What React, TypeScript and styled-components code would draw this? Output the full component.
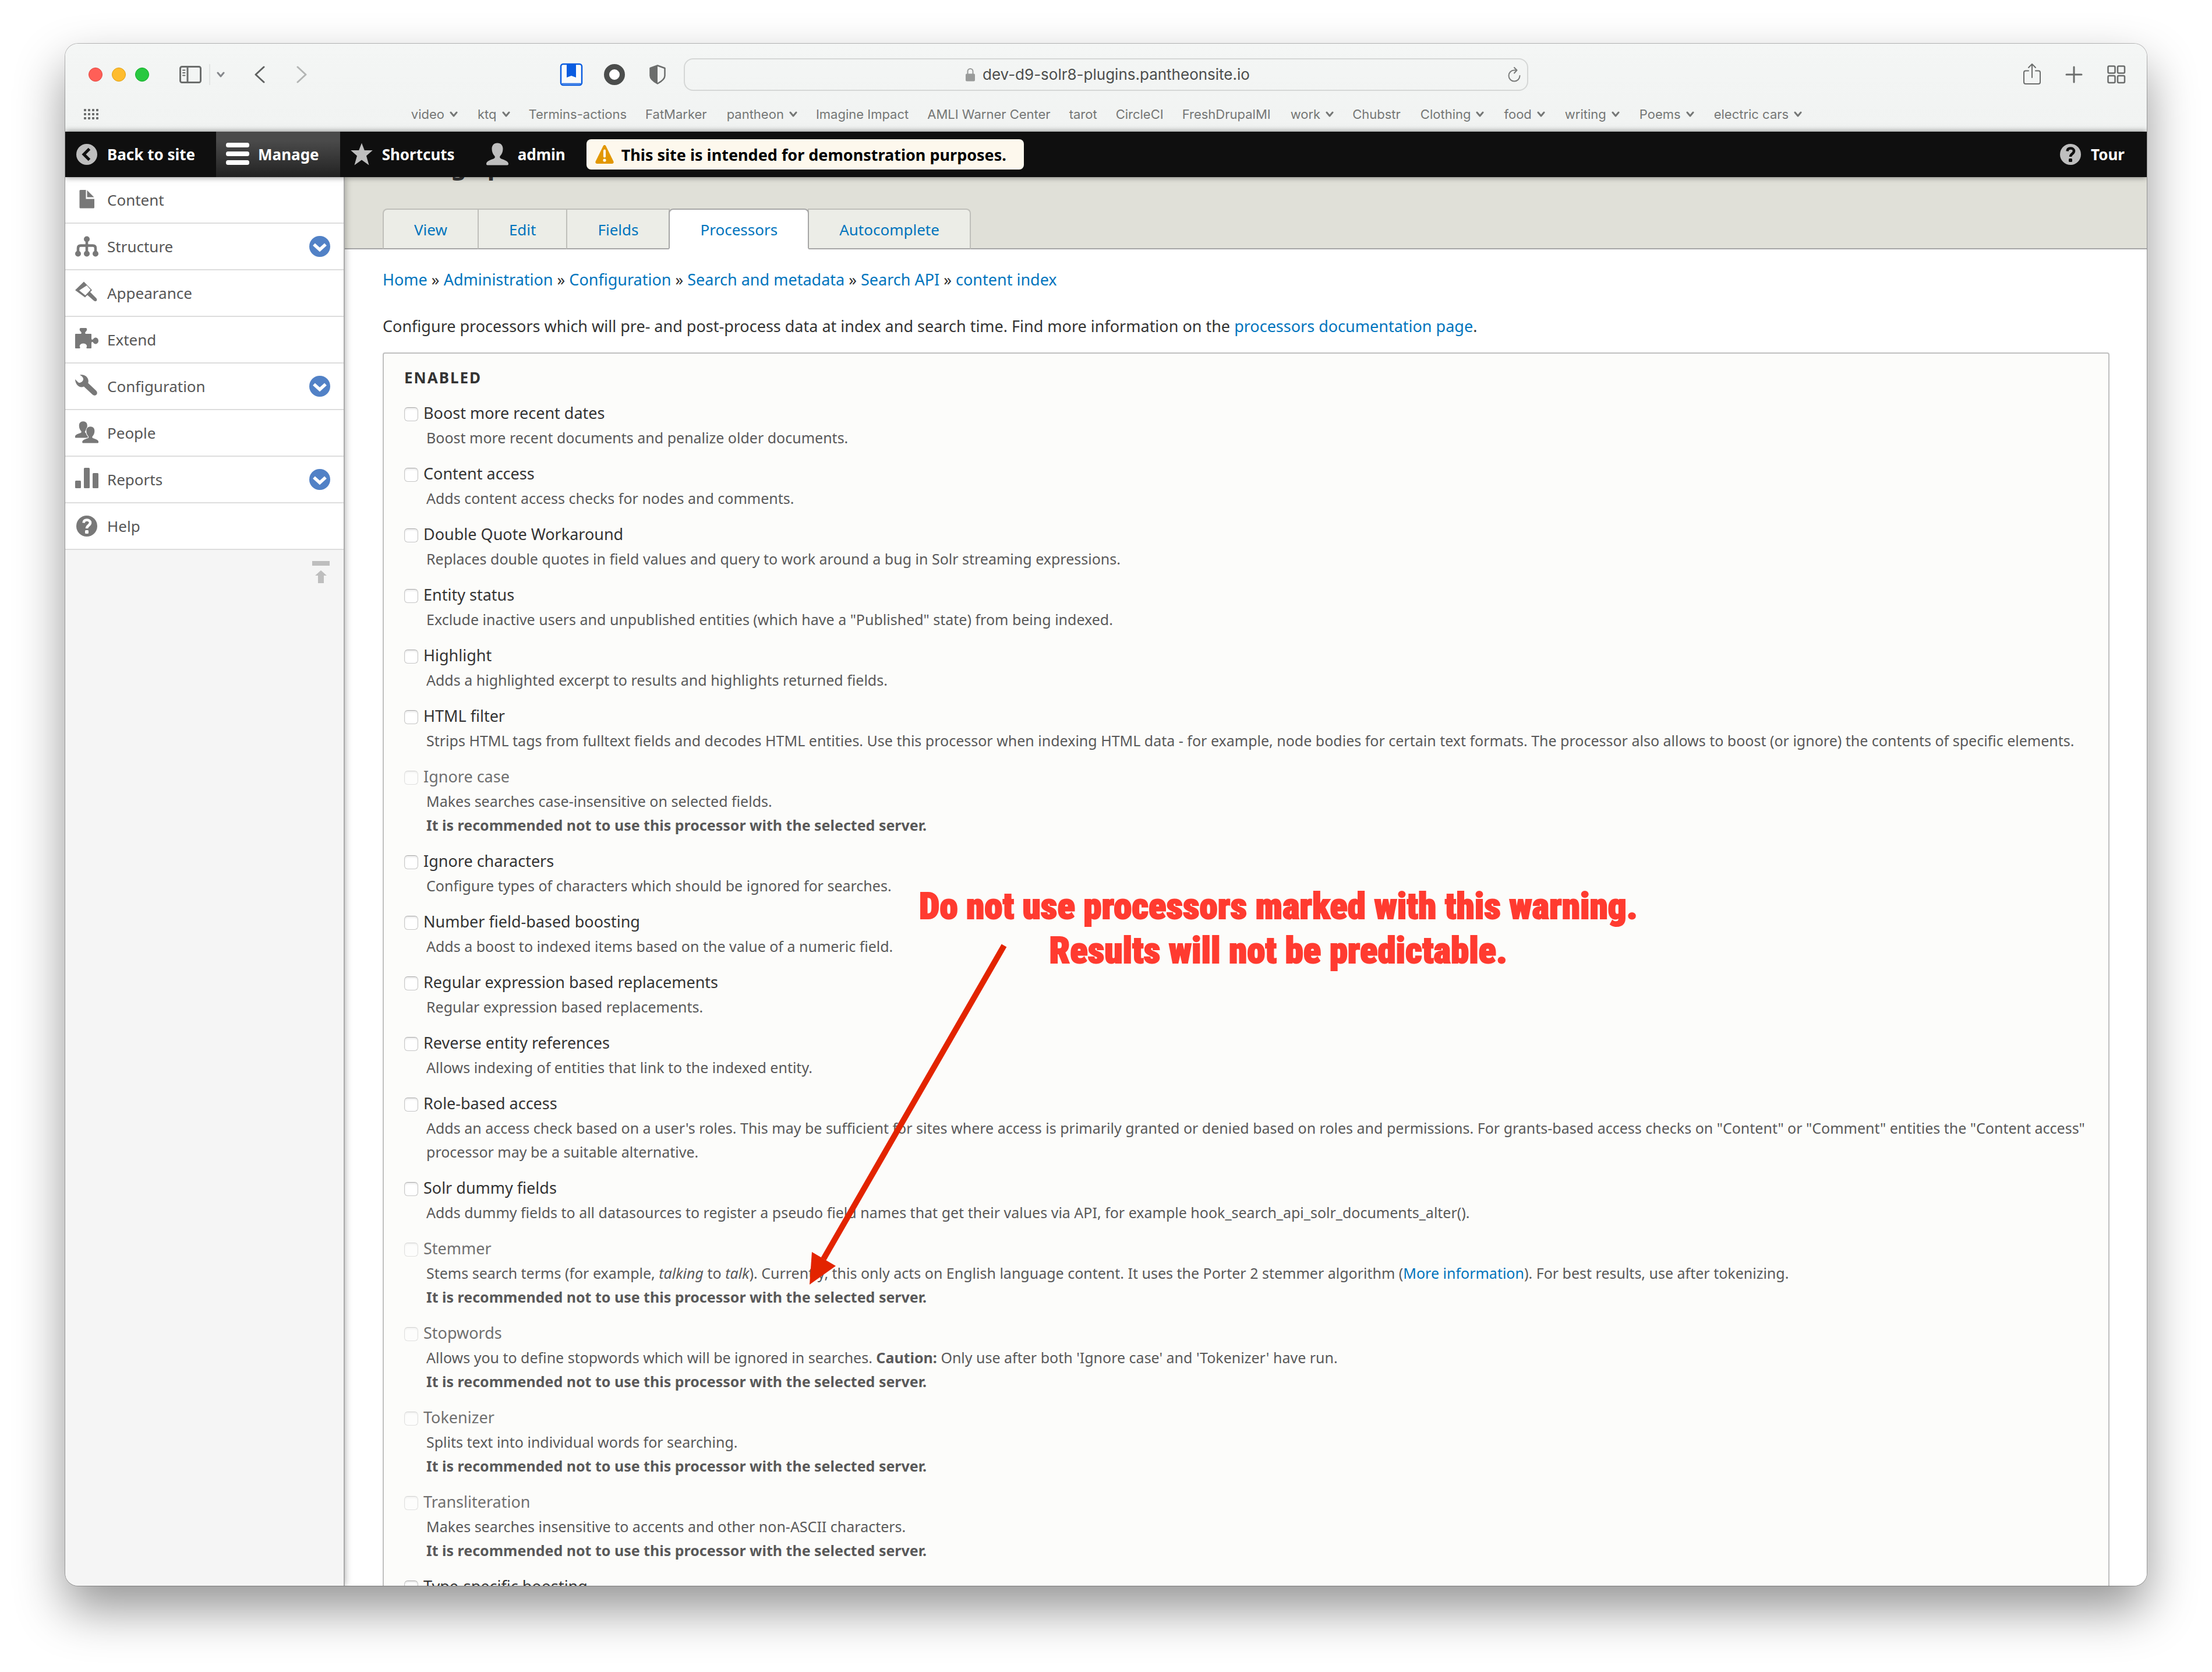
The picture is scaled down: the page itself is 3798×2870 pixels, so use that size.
import React from "react";
import styled, { createGlobalStyle, css } from "styled-components";

const uiFont = `"Noto Sans", "Open Sans", "DejaVu Sans", sans-serif`;
const chromeFont = `Inter, Roboto, "Liberation Sans", sans-serif`;
const linkBlue = "#0074bd";

const GlobalStyle = createGlobalStyle`
  *, *::before, *::after { box-sizing: border-box; }
  body { margin: 0; background: #fff; overflow: hidden; }
  button { border: 0; padding: 0; background: none; font: inherit; color: inherit; }
  ul, ol { list-style: none; margin: 0; padding: 0; }
  svg { display: block; flex: none; }
`;

const Desktop = styled.div`
  height: 100vh;
  padding: 75px 112px 148px;
  font-family: ${uiFont};
  color: #333;
`;

const BrowserWindow = styled.div`
  display: flex;
  flex-direction: column;
  height: 100%;
  overflow: hidden;
  border-radius: 22px;
  background: #fff;
  box-shadow: 0 0 0 1px rgba(0, 0, 0, 0.26), 0 40px 84px rgba(0, 0, 0, 0.42);
`;

/* ---------- browser chrome ---------- */

const Chrome = styled.header`
  flex: none;
  padding-top: 25px;
  background: linear-gradient(#f4f6f5, #f1f3f2);
  font-family: ${chromeFont};
  color: #6b6d6c;
`;

const ChromeRow = styled.div`
  display: grid;
  grid-template-columns: 1fr minmax(0, 1450px) 1fr;
  align-items: center;
  height: 56px;
`;

const ChromeLeft = styled.div`
  display: flex;
  align-items: center;
  padding: 0 25px 0 40px;
`;

const Lights = styled.div`
  display: flex;
  gap: 16px;
  margin-right: 51px;
`;

const Light = styled.button<{ $fill: string; $edge: string }>`
  width: 24px;
  height: 24px;
  border-radius: 50%;
  border: 1px solid ${(p) => p.$edge};
  background: ${(p) => p.$fill};
`;

const Divider = styled.span`
  width: 2px;
  height: 36px;
  margin: 0 11px 0 12px;
  background: #e2e4e3;
`;

const HistoryButtons = styled.div`
  display: flex;
  gap: 54px;
  margin-left: 51px;
`;

const Extensions = styled.div`
  display: flex;
  gap: 34px;
  margin-left: auto;
`;

const ChromeRight = styled.div`
  display: flex;
  justify-content: flex-end;
  gap: 32px;
  padding-right: 33px;
`;

const AddressBar = styled.div`
  display: flex;
  align-items: center;
  height: 56px;
  padding: 0 10px;
  border: 2px solid #d5d7d6;
  border-radius: 16px;
`;

const Address = styled.label`
  flex: 1;
  display: flex;
  align-items: center;
  justify-content: center;
  gap: 12px;
  padding-left: 30px;
`;

const AddressInput = styled.input`
  width: 460px;
  padding: 0;
  border: 0;
  outline: 0;
  background: none;
  font: 400 26px/36px ${chromeFont};
  color: #4c4e4d;
`;

const BookmarksRow = styled.div`
  display: grid;
  grid-template-columns: 1fr auto 1fr;
  align-items: center;
  height: 60px;
  margin-top: 10px;
  padding-left: 32px;
  padding-right: 32px;
`;

const Bookmarks = styled.ul`
  display: flex;
  gap: 32px;
`;

const Bookmark = styled.a<{ $menu?: boolean }>`
  display: flex;
  align-items: center;
  gap: 9px;
  padding-left: ${(p) => (p.$menu ? "2px" : "0")};
  font-size: 22px;
  line-height: 30px;
  color: #757776;
  text-decoration: none;
  white-space: nowrap;
`;

/* ---------- admin toolbar ---------- */

const AdminBar = styled.nav`
  position: relative;
  z-index: 3;
  flex: none;
  display: flex;
  align-items: stretch;
  height: 78px;
  background: #0f0f0f;
  box-shadow: 0 0 10px rgba(0, 0, 0, 0.5);
  font-weight: 700;
  font-size: 26px;
  color: #fff;
`;

const BarItem = styled.a<{ $active?: boolean }>`
  display: flex;
  align-items: center;
  gap: 15px;
  padding: 0 36px 0 17px;
  color: #fff;
  text-decoration: none;
  ${(p) => p.$active && css`background: linear-gradient(#4a4a4a 20%, #222);`}
`;

const DemoNotice = styled.div`
  align-self: center;
  display: flex;
  align-items: center;
  gap: 13px;
  height: 52px;
  padding: 0 30px 0 15px;
  border-radius: 8px;
  background: #fdf8ed;
  color: #000;
  font-size: 27px;
`;

const BarEnd = styled.div`
  display: flex;
  margin-left: auto;
  padding-right: 2px;
`;

/* ---------- page body ---------- */

const Viewport = styled.div`
  flex: 1;
  min-height: 0;
  display: flex;
  overflow: hidden;
`;

const Tray = styled.nav`
  position: relative;
  z-index: 2;
  flex: 0 0 480px;
  border-right: 2px solid #aaa;
  background: #f5f5f5;
  box-shadow: 0 0 12px rgba(0, 0, 0, 0.35);
`;

const TrayRow = styled.li`
  display: flex;
  align-items: center;
  height: 80px;
  padding-right: 23px;
  border-bottom: 2px solid #ddd;
  background: #fff;
`;

const TrayLink = styled.a`
  flex: 1;
  display: flex;
  align-items: center;
  gap: 15px;
  padding-left: 17px;
  font-size: 26px;
  line-height: 36px;
  color: #565656;
  text-decoration: none;
`;

const TrayFoot = styled.div`
  display: flex;
  justify-content: flex-end;
  padding: 19px 23px;
`;

const Main = styled.main`
  position: relative;
  flex: 1;
  min-width: 0;
  background: #fff;
`;

const PageHeader = styled.div`
  padding: 0 64px 0 65px;
  border-bottom: 2px solid #a6a6a6;
  background: #e0e0d8;
`;

const PageTitle = styled.h1`
  margin: -45px 0 49px;
  font-size: 42px;
  line-height: 50px;
  font-weight: 700;
`;

const Tabs = styled.ul`
  display: flex;
  margin-bottom: -2px;
`;

const TabItem = styled.li`
  & + & { margin-left: -2px; }
`;

const Tab = styled.a<{ $active?: boolean }>`
  position: relative;
  z-index: ${(p) => (p.$active ? 1 : 0)};
  display: block;
  padding: 16px 52px 14px;
  border: 2px solid ${(p) => (p.$active ? "#a6a6a6" : "#bfbfba")};
  border-bottom-color: ${(p) => (p.$active ? "#fff" : "#a6a6a6")};
  border-radius: ${(p) => (p.$active ? "8px 8px 0 0" : "0")};
  background: ${(p) => (p.$active ? "#fff" : "#ecede7")};
  font-size: 26px;
  line-height: 36px;
  color: ${linkBlue};
  text-decoration: none;

  ${TabItem}:first-child & { border-top-left-radius: 8px; }
  ${TabItem}:last-child & { border-top-right-radius: 8px; }
`;

const Content = styled.div`
  padding: 32px 64px 0 65px;
  font-size: 27px;
  line-height: 40px;
`;

const Link = styled.a`
  color: ${linkBlue};
  text-decoration: none;
`;

const Intro = styled.p`
  margin: 40px 0 25px;
`;

const Processors = styled.fieldset`
  min-width: 0;
  margin: 0;
  padding: 19px 34px 40px 35px;
  border: 2px solid #bfbfbf;
  border-radius: 4px;
  background: #fcfcfa;
`;

const Legend = styled.legend`
  float: left;
  width: 100%;
  margin-bottom: 17px;
  padding: 0;
  font-size: 26px;
  line-height: 44px;
  font-weight: 700;
  letter-spacing: 2px;
  text-transform: uppercase;
`;

const ProcessorList = styled.div`
  clear: both;
`;

const Processor = styled.div`
  margin-bottom: 19px;
`;

const ProcessorHead = styled.div`
  display: flex;
  align-items: center;
  gap: 9px;
`;

const Checkbox = styled.input`
  appearance: none;
  flex: none;
  width: 24px;
  height: 24px;
  margin: 3px 0 0;
  border: 1px solid #c6c6c6;
  border-top-color: #aaa;
  border-radius: 6px;
  background: #fff;
  box-shadow: inset 0 2px 3px rgba(0, 0, 0, 0.1);

  &:disabled { opacity: 0.5; }
`;

const ProcessorLabel = styled.label<{ $disabled?: boolean }>`
  font-size: 27px;
  line-height: 44px;
  color: ${(p) => (p.$disabled ? "#6f6f6f" : "#333")};
`;

const Description = styled.div`
  padding-left: 38px;
  font-size: 25px;
  line-height: 41px;
  color: #595959;
`;

const Callout = styled.p`
  position: absolute;
  z-index: 1;
  top: 1214px;
  left: 986px;
  margin: 0;
  font: 900 63px/76px "Roboto Condensed", Roboto, sans-serif;
  -webkit-text-stroke: 2px #ff3b30;
  text-align: center;
  color: #ff3b30;
`;

const CalloutArrow = styled.svg`
  position: absolute;
  z-index: 1;
  top: 1311px;
  left: 788px;
`;

/* ---------- icons ---------- */

const Stroke = ({ w = 40, h = 40, d, color = "#6b6d6c", sw = 3 }: { w?: number; h?: number; d: string; color?: string; sw?: number }) => (
  <svg width={w} height={h} viewBox={`0 0 ${w} ${h}`} fill="none" stroke={color} strokeWidth={sw} strokeLinecap="round" strokeLinejoin="round">
    <path d={d} />
  </svg>
);

const SmallChevron = ({ color = "#757776" }: { color?: string }) => (
  <Stroke w={14} h={12} d="M2 3l5 6 5-6" color={color} sw={3} />
);

const SidebarIcon = () => (
  <svg width="40" height="32" viewBox="0 0 40 32" fill="none" stroke="#6b6d6c" strokeWidth="3" strokeLinecap="round">
    <rect x="2.500" y="2.500" width="35" height="27" rx="3" />
    <path d="M15 2.500v27" />
    <path d="M7 8.500h3.500M7 13h3.500M7 17.500h3.500" strokeWidth="2" />
  </svg>
);

const BookmarkExtension = () => (
  <svg width="40" height="40" viewBox="0 0 40 40">
    <rect x="2" y="2" width="36" height="36" rx="4" fill="#fff" fillOpacity="0.6" stroke="#0a5ce0" strokeWidth="2.500" />
    <path d="M12 2h16v23l-8-3-8 3z" fill="#0a5ce0" />
    <path d="M4 35.500h32" stroke="#0a5ce0" strokeWidth="1.500" />
  </svg>
);

const RingExtension = () => (
  <svg width="40" height="40" viewBox="0 0 40 40">
    <circle cx="20" cy="20" r="13.500" fill="#fff" stroke="#4b4d4c" strokeWidth="9" />
  </svg>
);

const ShieldIcon = () => (
  <svg width="40" height="40" viewBox="0 0 40 40">
    <path d="M20 4.500L32.500 9v13c0 6-6 10-12.500 13.500C13.500 32 7.500 28 7.500 22V9z" fill="none" stroke="#6b6d6c" strokeWidth="2.500" strokeLinejoin="round" />
    <path d="M20 4.500L7.500 9v13c0 6 6 10 12.500 13.500z" fill="#6b6d6c" />
  </svg>
);

const LockIcon = () => (
  <svg width="18" height="24" viewBox="0 0 18 24">
    <rect x="1" y="10.500" width="16" height="13" rx="2" fill="#999b9a" />
    <path d="M4.500 11V6.500a4.500 4.500 0 0 1 9 0V11" fill="none" stroke="#999b9a" strokeWidth="2" />
  </svg>
);

const AppsGrid = () => (
  <svg width="26" height="18" viewBox="0 0 26 18" fill="#6b6d6c">
    {[0, 7, 14].map((y) => [0, 7, 14, 21].map((x) => <rect key={`${x}-${y}`} x={x} y={y} width="4" height="4" rx="1" />))}
  </svg>
);

const TabOverview = () => (
  <svg width="40" height="40" viewBox="0 0 40 40" fill="none" stroke="#6b6d6c" strokeWidth="2.500">
    <rect x="6.500" y="5.500" width="12" height="12" rx="2" />
    <rect x="23" y="5.500" width="12" height="12" rx="2" />
    <rect x="6.500" y="22" width="12" height="12" rx="2" />
    <rect x="23" y="22" width="12" height="12" rx="2" />
  </svg>
);

const BackDisc = () => (
  <svg width="40" height="40" viewBox="0 0 40 40">
    <circle cx="20" cy="20" r="18" fill="#bebebe" />
    <path d="M24.500 10.500L15 20l9.500 9.500" fill="none" stroke="#0f0f0f" strokeWidth="5" />
  </svg>
);

const MenuIcon = () => (
  <svg width="40" height="40" viewBox="0 0 40 40" fill="#fff">
    <rect y="0" width="40" height="8" rx="3.500" />
    <rect y="15" width="40" height="8" rx="3.500" />
    <rect y="30" width="40" height="8" rx="3.500" />
  </svg>
);

const StarIcon = () => (
  <svg width="40" height="40" viewBox="0 0 40 40" fill="#bebebe">
    <path d="M20 .5l4.800 12.500h14l-10.800 9.500 4.500 16L20 29.500 7.500 38.500l4.500-16L1.200 13h14z" />
  </svg>
);

const PersonShape = "M20 .5c-6 0-9.500 4-9.500 10 0 5 2 9.500 4.500 12 1.500 1.800 1 4-1.500 5C8 29.500 1 31.500 1 36.500c0 1.300.8 2 2 2h34c1.200 0 2-.7 2-2 0-5-7-7-12.500-9-2.500-1-3-3.200-1.500-5 2.500-2.500 4.500-7 4.500-12 0-6-3.500-10-9.500-10z";

const PersonIcon = () => (
  <svg width="40" height="40" viewBox="0 0 40 40" fill="#bebebe"><path d={PersonShape} /></svg>
);

const WarningIcon = () => (
  <svg width="32" height="34" viewBox="0 0 32 34">
    <path d="M16 1c1 0 1.800.5 2.300 1.500l12.800 26c1.200 2.500.2 4.500-2.300 4.500H3.200C.7 33-.3 31 .9 28.500l12.800-26C14.200 1.500 15 1 16 1z" fill="#e29700" />
    <path d="M16 10.500v10" stroke="#fff" strokeWidth="4" strokeLinecap="round" />
    <circle cx="16" cy="27" r="2.600" fill="#fff" />
  </svg>
);

const HelpDisc = ({ fill, mark }: { fill: string; mark: string }) => (
  <svg width="40" height="40" viewBox="0 0 40 40">
    <circle cx="20" cy="20" r="18" fill={fill} />
    <path d="M14.500 14.500c.3-3.500 2.800-5 5.800-5 3.400 0 5.700 2 5.700 4.800 0 4.700-6 4.700-6 9.700" fill="none" stroke={mark} strokeWidth="4.500" />
    <rect x="17" y="27" width="6" height="6" rx="1.500" fill={mark} />
  </svg>
);

const TrayIcon = ({ children }: { children: React.ReactNode }) => (
  <svg width="40" height="40" viewBox="0 0 40 40" fill="#787878">{children}</svg>
);

const trayIcons: Record<string, React.ReactNode> = {
  Content: (
    <TrayIcon>
      <path d="M9 3h9.500v15.500H33V33a1.500 1.500 0 0 1-1.500 1.500H9A1.500 1.500 0 0 1 7.500 33V4.500A1.500 1.500 0 0 1 9 3zM20.500 3.500L32.500 15.500h-12z" />
    </TrayIcon>
  ),
  Structure: (
    <TrayIcon>
      <path d="M20 8v24M5 32v-9c0-3 1.500-4.500 4.500-4.500h21c3 0 4.500 1.500 4.500 4.500v9" fill="none" stroke="#787878" strokeWidth="4.500" />
      <circle cx="20" cy="7.500" r="5" />
      <circle cx="5" cy="32.500" r="5" />
      <circle cx="20" cy="32.500" r="5" />
      <circle cx="35" cy="32.500" r="5" />
    </TrayIcon>
  ),
  Appearance: (
    <TrayIcon>
      <path d="M15 .5l14 14.500-12 12.500L0 15z" />
      <path d="M19 7l6.500 7.500-9 9.500L6 15.500z" fill="#fff" transform="translate(1 0)" />
      <path d="M25 17.500l10.500 10.500c1.500 1.500 2.500 3.500 1.500 5s-3.500 1.500-5 0L20.500 23z" />
    </TrayIcon>
  ),
  Extend: (
    <TrayIcon>
      <path d="M1 10h9c1.500-1 1-3-1-4.500C7 3.500 7.500 0 9.500 0h9c2 0 2.500 3.500.5 5.500-2 1.500-2.500 3.500-1 4.500h9a1 1 0 0 1 1 1v8c1 1.500 2.500 1 3.500-.5 3-4 8.500-1.500 8.500 3.500s-5.500 7.500-8.500 3.500c-1-1.500-2.500-2-3.500-.5V34a1 1 0 0 1-1 1h-7c-1-1-.5-2 0-3 1-2-1.500-5.500-6-5.500s-7 3.500-6 5.500c.5 1 1 2 0 3H1a1 1 0 0 1-1-1V11a1 1 0 0 1 1-1z" />
    </TrayIcon>
  ),
  Configuration: (
    <TrayIcon>
      <path d="M8 .8C15-1 21 3 22.500 9c.5 2 .2 4-.2 5.500L36 27.500c2.500 2.500 2 5.500.5 7s-4.500 2-7-.5L15 20.500C8 24 .5 18 0 8l5.500 5.500c2 1.500 8-.5 8.500-5.500.2-3-2.500-5.500-6-7.200z" />
    </TrayIcon>
  ),
  People: (
    <TrayIcon>
      <g transform="translate(-1 0) scale(.74)"><path d={PersonShape} /></g>
      <g transform="translate(11.500 9) scale(.74)" stroke="#fff" strokeWidth="3" paintOrder="stroke"><path d={PersonShape} /></g>
    </TrayIcon>
  ),
  Reports: (
    <TrayIcon>
      <rect x="0" y="22" width="10" height="13" rx="1.500" />
      <rect x="15" y="0" width="10" height="35" rx="1.500" />
      <rect x="30" y="9" width="10" height="26" rx="1.500" />
    </TrayIcon>
  ),
  Help: <HelpDisc fill="#787878" mark="#fff" />,
};

const ExpandDisc = () => (
  <svg width="36" height="36" viewBox="0 0 36 36">
    <circle cx="18" cy="18" r="18" fill="#5181c6" />
    <path d="M8 14.500l10 9 10-9" fill="none" stroke="#fff" strokeWidth="5.500" />
  </svg>
);

const CollapseIcon = () => (
  <svg width="32" height="40" viewBox="0 0 32 40" fill="#bebebe">
    <path d="M1 0h30v8H1zM16 16l10 9h-5v13H11V25H6z" />
  </svg>
);

/* ---------- data ---------- */

const bookmarks: [string, boolean][] = [
  ["video", true], ["ktq", true], ["Termins-actions", false], ["FatMarker", false], ["pantheon", true],
  ["Imagine Impact", false], ["AMLI Warner Center", false], ["tarot", false], ["CircleCI", false],
  ["FreshDrupalMI", false], ["work", true], ["Chubstr", false], ["Clothing", true], ["food", true],
  ["writing", true], ["Poems", true], ["electric cars", true],
];

const trayItems: [string, boolean][] = [
  ["Content", false], ["Structure", true], ["Appearance", false], ["Extend", false],
  ["Configuration", true], ["People", false], ["Reports", true], ["Help", false],
];

const tabs = ["View", "Edit", "Fields", "Processors", "Autocomplete"];
const crumbs = ["Home", "Administration", "Configuration", "Search and metadata", "Search API", "content index"];

type ProcessorInfo = { name: string; text: React.ReactNode; discouraged?: boolean };

const processors: ProcessorInfo[] = [
  { name: "Boost more recent dates", text: "Boost more recent documents and penalize older documents." },
  { name: "Content access", text: "Adds content access checks for nodes and comments." },
  { name: "Double Quote Workaround", text: "Replaces double quotes in field values and query to work around a bug in Solr streaming expressions." },
  { name: "Entity status", text: 'Exclude inactive users and unpublished entities (which have a "Published" state) from being indexed.' },
  { name: "Highlight", text: "Adds a highlighted excerpt to results and highlights returned fields." },
  { name: "HTML filter", text: "Strips HTML tags from fulltext fields and decodes HTML entities. Use this processor when indexing HTML data - for example, node bodies for certain text formats. The processor also allows to boost (or ignore) the contents of specific elements." },
  { name: "Ignore case", text: "Makes searches case-insensitive on selected fields.", discouraged: true },
  { name: "Ignore characters", text: "Configure types of characters which should be ignored for searches." },
  { name: "Number field-based boosting", text: "Adds a boost to indexed items based on the value of a numeric field." },
  { name: "Regular expression based replacements", text: "Regular expression based replacements." },
  { name: "Reverse entity references", text: "Allows indexing of entities that link to the indexed entity." },
  { name: "Role-based access", text: 'Adds an access check based on a user\'s roles. This may be sufficient for sites where access is primarily granted or denied based on roles and permissions. For grants-based access checks on "Content" or "Comment" entities the "Content access" processor may be a suitable alternative.' },
  { name: "Solr dummy fields", text: "Adds dummy fields to all datasources to register a pseudo field names that get their values via API, for example hook_search_api_solr_documents_alter()." },
  {
    name: "Stemmer",
    text: <>Stems search terms (for example, <em>talking</em> to <em>talk</em>). Currently, this only acts on English language content. It uses the Porter 2 stemmer algorithm (<Link href="#more">More information</Link>). For best results, use after tokenizing.</>,
    discouraged: true,
  },
  {
    name: "Stopwords",
    text: <>Allows you to define stopwords which will be ignored in searches. <strong>Caution:</strong> Only use after both 'Ignore case' and 'Tokenizer' have run.</>,
    discouraged: true,
  },
  { name: "Tokenizer", text: "Splits text into individual words for searching.", discouraged: true },
  { name: "Transliteration", text: "Makes searches insensitive to accents and other non-ASCII characters.", discouraged: true },
  { name: "Type-specific boosting", text: "" },
];

/* ---------- page ---------- */

const BrowserChrome = () => (
  <Chrome>
    <ChromeRow>
      <ChromeLeft>
        <Lights>
          <Light aria-label="Close" $fill="#ff5f57" $edge="#e2463f" />
          <Light aria-label="Minimize" $fill="#febc2e" $edge="#e1a116" />
          <Light aria-label="Zoom" $fill="#28c840" $edge="#12ac28" />
        </Lights>
        <button aria-label="Show sidebar"><SidebarIcon /></button>
        <Divider />
        <button aria-label="Sidebar options"><SmallChevron color="#85878b" /></button>
        <HistoryButtons>
          <button aria-label="Back"><Stroke w={18} h={30} d="M16 2L2 15l14 13" color="#5f6160" /></button>
          <button aria-label="Forward"><Stroke w={18} h={30} d="M2 2l14 13L2 28" color="#b3b5b4" /></button>
        </HistoryButtons>
        <Extensions>
          <button aria-label="Save bookmark"><BookmarkExtension /></button>
          <button aria-label="Recorder"><RingExtension /></button>
          <button aria-label="Privacy report"><ShieldIcon /></button>
        </Extensions>
      </ChromeLeft>
      <AddressBar>
        <Address>
          <LockIcon />
          <AddressInput aria-label="Address" defaultValue="dev-d9-solr8-plugins.pantheonsite.io" />
        </Address>
        <button aria-label="Reload">
          <Stroke w={24} h={28} d="M21.500 16a9.500 9.500 0 1 1-9.500-9.500h4M12 2l4.500 4.500L12 11.500" color="#7a7c7b" sw={2} />
        </button>
      </AddressBar>
      <ChromeRight>
        <button aria-label="Share"><Stroke d="M14 13.500H9c-2 0-3 1-3 3V33c0 2 1 3 3 3h22c2 0 3-1 3-3V16.500c0-2-1-3-3-3h-5M20 25V2M14 8l6-6 6 6" sw={2} /></button>
        <button aria-label="New tab"><Stroke d="M20 7v26M7 20h26" /></button>
        <button aria-label="Tab overview"><TabOverview /></button>
      </ChromeRight>
    </ChromeRow>
    <BookmarksRow>
      <AppsGrid />
      <Bookmarks>
        {bookmarks.map(([name, menu]) => (
          <li key={name}>
            <Bookmark href="#bookmark" $menu={menu}>
              {name}
              {menu && <SmallChevron />}
            </Bookmark>
          </li>
        ))}
      </Bookmarks>
    </BookmarksRow>
  </Chrome>
);

export default function App() {
  return (
    <Desktop>
      <GlobalStyle />
      <BrowserWindow>
        <BrowserChrome />
        <AdminBar aria-label="Administration">
          <BarItem href="#back"><BackDisc />Back to site</BarItem>
          <BarItem href="#manage" $active><MenuIcon />Manage</BarItem>
          <BarItem href="#shortcuts"><StarIcon />Shortcuts</BarItem>
          <BarItem href="#admin"><PersonIcon />admin</BarItem>
          <DemoNotice><WarningIcon />This site is intended for demonstration purposes.</DemoNotice>
          <BarEnd>
            <BarItem href="#tour"><HelpDisc fill="#bebebe" mark="#0f0f0f" />Tour</BarItem>
          </BarEnd>
        </AdminBar>
        <Viewport>
          <Tray aria-label="Manage">
            <ul>
              {trayItems.map(([name, expandable]) => (
                <TrayRow key={name}>
                  <TrayLink href="#tray">{trayIcons[name]}{name}</TrayLink>
                  {expandable && <button aria-label={`Expand ${name}`}><ExpandDisc /></button>}
                </TrayRow>
              ))}
            </ul>
            <TrayFoot>
              <button aria-label="Horizontal orientation"><CollapseIcon /></button>
            </TrayFoot>
          </Tray>
          <Main>
            <PageHeader>
              <PageTitle>Manage processors for search index content index</PageTitle>
              <Tabs>
                {tabs.map((name) => (
                  <TabItem key={name}>
                    <Tab href="#tab" $active={name === "Processors"}>{name}</Tab>
                  </TabItem>
                ))}
              </Tabs>
            </PageHeader>
            <Content>
              <nav aria-label="Breadcrumb">
                {crumbs.map((name, i) => (
                  <React.Fragment key={name}>
                    {i > 0 && " » "}
                    <Link href="#crumb">{name}</Link>
                  </React.Fragment>
                ))}
              </nav>
              <Intro>
                Configure processors which will pre- and post-process data at index and search time. Find more information on the{" "}
                <Link href="#docs">processors documentation page</Link>.
              </Intro>
              <Processors>
                <Legend>Enabled</Legend>
                <ProcessorList>
                  {processors.map(({ name, text, discouraged }, i) => (
                    <Processor key={name}>
                      <ProcessorHead>
                        <Checkbox type="checkbox" id={`processor-${i}`} disabled={discouraged} />
                        <ProcessorLabel htmlFor={`processor-${i}`} $disabled={discouraged}>{name}</ProcessorLabel>
                      </ProcessorHead>
                      <Description>
                        {text}
                        {discouraged && <><br /><strong>It is recommended not to use this processor with the selected server.</strong></>}
                      </Description>
                    </Processor>
                  ))}
                </ProcessorList>
              </Processors>
            </Content>
            <Callout>
              Do not use processors marked with this warning.
              <br />
              Results will not be predictable.
            </Callout>
            <CalloutArrow width="360" height="600" viewBox="0 0 360 600" aria-hidden="true">
              <path d="M344 8L34 546" stroke="#e32400" strokeWidth="10" />
              <path d="M10 590l4-56 41 24z" fill="#e32400" />
            </CalloutArrow>
          </Main>
        </Viewport>
      </BrowserWindow>
    </Desktop>
  );
}
